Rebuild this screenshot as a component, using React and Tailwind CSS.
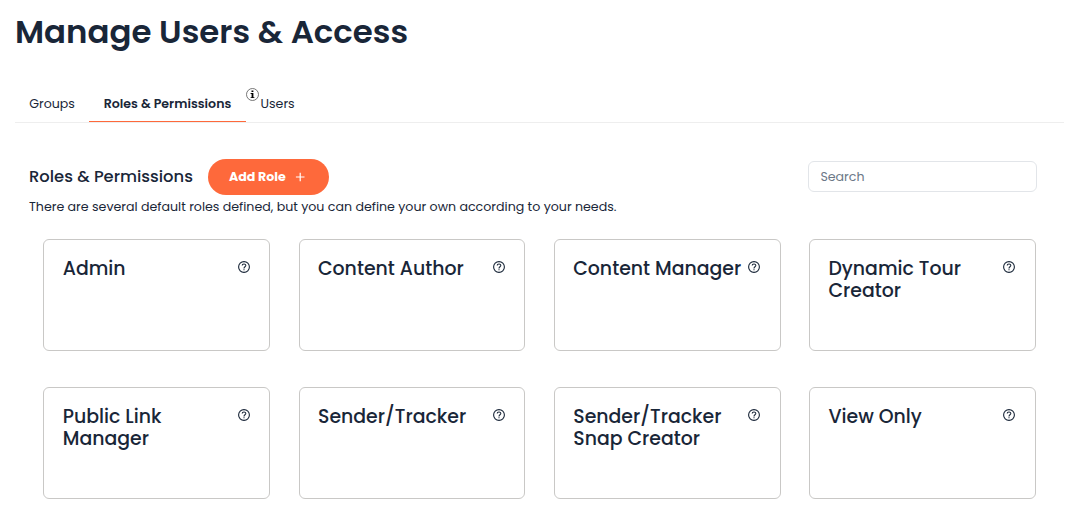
import React, { useState } from "react";

const tabs = ["Groups", "Roles & Permissions", "Users"];

const roles = [
  { id: 1, name: "Admin" },
  { id: 2, name: "Content Author" },
  { id: 3, name: "Content Manager" },
  { id: 4, name: "Dynamic Tour Creator" },
  { id: 5, name: "Public Link Manager" },
  { id: 6, name: "Sender/Tracker" },
  { id: 7, name: "Sender/Tracker Snap Creator" },
  { id: 8, name: "View Only" },
];

const InfoIcon = () => (
  <svg width="13" height="13" viewBox="0 0 13 13" className="block">
    <circle cx="6.5" cy="6.5" r="6" fill="none" stroke="#555" strokeWidth="0.8" />
    <path d="M5.5 2.4h1.9v1.6H5.5zM4.6 5h2.8v4.2h1v.9H4.6v-.9h1V5.9h-1z" fill="#000" />
  </svg>
);

const HelpIcon = () => (
  <svg width="12" height="12" viewBox="0 0 12 12" fill="none" stroke="#192638" className="block">
    <circle cx="6" cy="6" r="5.4" strokeWidth="1.1" />
    <path d="M4.2 4.6c0-2.2 3.6-2.2 3.6-.1C7.8 5.8 6 5.8 6 7.4" strokeWidth="1.1" />
    <path d="M6 8.2v1.1" strokeWidth="1.1" />
  </svg>
);

const RoleCard = ({ role }) => (
  <div className="flex h-28 items-start justify-between rounded-md border border-[#c9c8c6] pt-[18px] pr-[19.7px] pl-[18.4px]">
    <h3 className="w-[172px] text-[18.9px] leading-[22px] font-medium">{role.name}</h3>
    <button className="mt-[3px] -ml-2">
      <HelpIcon />
    </button>
  </div>
);

const App = () => {
  const [activeTab, setActiveTab] = useState("Roles & Permissions");
  const [search, setSearch] = useState("");

  return (
    <div className="h-[517px] overflow-hidden bg-white font-[Poppins,Inter,sans-serif] text-[12.6px] text-[#192638]">
      <h1 className="pt-2 pl-[15px] text-[32.4px] leading-[48px] font-semibold">
        Manage Users &amp; Access
      </h1>

      <div className="mt-[29px] mr-[6px] ml-[15px] flex h-[38px] border-b border-[#eeeeee]">
        {tabs.map((tab) => (
          <React.Fragment key={tab}>
            {tab === "Users" && (
              <div className="w-[14.5px] pt-[3px]">
                <InfoIcon />
              </div>
            )}
            <button
              onClick={() => setActiveTab(tab)}
              className={
                activeTab === tab
                  ? "h-[37px] w-[157px] border-b border-[#fe693b] pt-[3px] text-center font-semibold"
                  : tab === "Groups"
                    ? "h-[37px] w-[74px] pt-[2px] text-center"
                    : "h-[37px] pt-[2px] text-left"
              }
            >
              {tab}
            </button>
          </React.Fragment>
        ))}
      </div>

      <div className="mt-9 flex h-9 items-center pr-[33px] pl-[29px]">
        <h2 className="w-[179px] text-[16.38px] font-medium whitespace-nowrap">Roles &amp; Permissions</h2>
        <button className="flex h-9 w-[121px] items-center rounded-full bg-[#fe693b] pl-[21px] font-bold text-white">
          <span className="w-[66px] text-left">Add Role</span>
          <svg width="10" height="10" viewBox="0 0 10 10" stroke="#fff" strokeWidth="1.2">
            <path d="M5.2 .7v8.6M.9 5h8.6" />
          </svg>
        </button>
        <input
          value={search}
          onChange={(e) => setSearch(e.target.value)}
          placeholder="Search"
          className="mb-[2px] ml-auto h-[31px] w-[229px] rounded-md border border-[#e2e5e9] px-[11.4px] pt-[2px] placeholder:text-[#6c7887]"
        />
      </div>
      <p className="mt-[2px] pl-[29px] text-[12.62px] leading-5 whitespace-nowrap">
        There are several default roles defined, but you can define your own according to your needs.
      </p>

      <div className="mt-[22px] ml-[43.35px] grid w-[992.65px] grid-cols-4 gap-x-[28.35px] gap-y-9">
        {roles.map((role) => (
          <RoleCard key={role.id} role={role} />
        ))}
      </div>
    </div>
  );
};

export default App;
